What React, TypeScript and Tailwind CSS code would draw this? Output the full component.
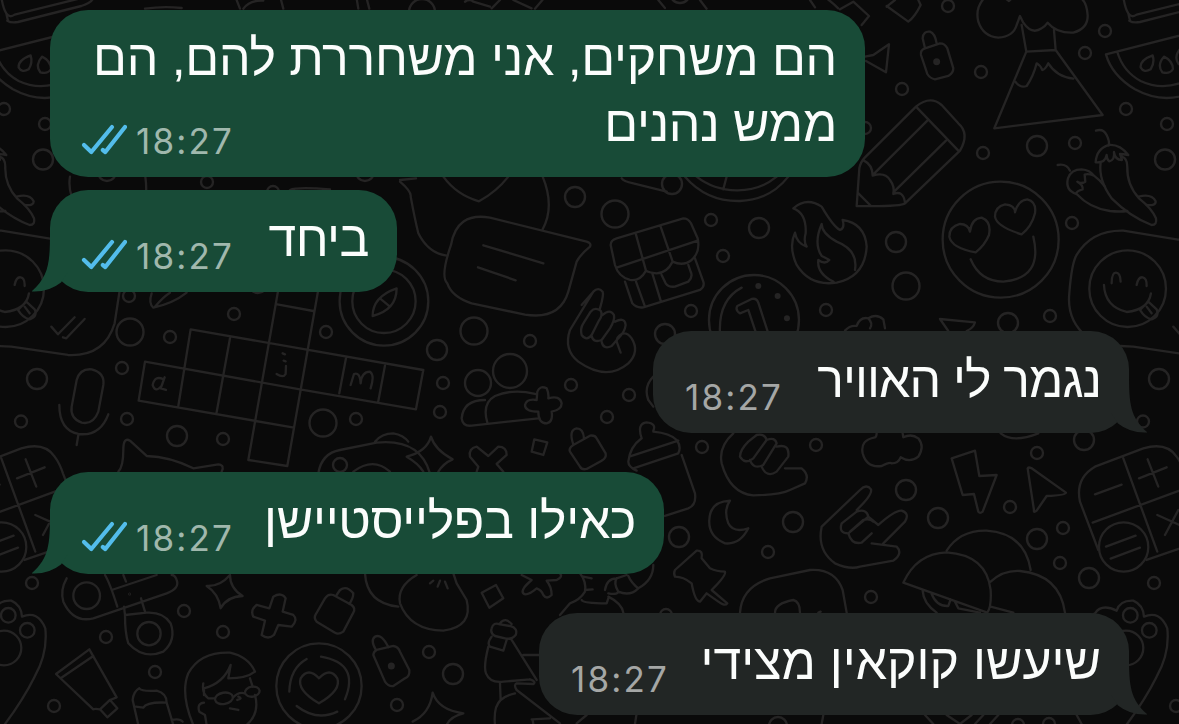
import React from 'react';

interface Message {
  id: number;
  lines: string[];
  time: string;
  outgoing: boolean;
  tail: boolean;
  box: string;
  text: string;
}

const messages: Message[] = [
  {
    id: 1,
    lines: ['הם משחקים, אני משחררת להם, הם', 'ממש נהנים'],
    time: '18:27',
    outgoing: true,
    tail: false,
    box: 'w-[815px] h-[167px]',
    text: 'tracking-[-0.270px]',
  },
  {
    id: 2,
    lines: ['ביחד'],
    time: '18:27',
    outgoing: true,
    tail: true,
    box: 'w-[347px] h-[102px] mt-[13px]',
    text: 'tracking-[-0.500px]',
  },
  {
    id: 3,
    lines: ['נגמר לי האוויר'],
    time: '18:27',
    outgoing: false,
    tail: true,
    box: 'w-[476px] h-[102px] mt-[39px]',
    text: 'tracking-[-1px]',
  },
  {
    id: 4,
    lines: ['כאילו בפלייסטיישן'],
    time: '18:27',
    outgoing: true,
    tail: true,
    box: 'w-[614px] h-[102px] mt-[39px]',
    text: 'tracking-[-0.280px]',
  },
  {
    id: 5,
    lines: ['שיעשו קוקאין מצידי'],
    time: '18:27',
    outgoing: false,
    tail: true,
    box: 'w-[590px] h-[102px] mt-[39px]',
    text: 'tracking-[0px]',
  },
];

// x, y, radius of the loose dots in the wallpaper
const dots = [
  [948, 6, 6], [981, 72, 6], [902, 89, 6], [1037, 146, 10], [983, 153, 6], [896, 242, 10],
  [906, 286, 13.5], [826, 310, 6], [1008, 323, 10], [865, 128, 6], [575, 197, 10], [615, 214, 13.5],
  [672, 184, 10], [711, 220, 6], [759, 228, 10], [723, 256, 6], [691, 311, 6], [474, 331, 13.5],
  [665, 334, 10], [422, 12, 13], [680, -7, 10], [207, 182, 6], [107, 172, 9], [273, 192, 6],
  [365, 172, 9], [129, 296, 6], [130, 332, 13.5], [170, 337, 6], [234, 314, 6], [326, 332, 6],
  [122, 368, 6], [127, 419, 6], [177, 436, 10], [223, 439, 6], [323, 423, 13.5], [356, 419, 6],
  [340, 465, 7], [258, 284, 9], [437, 350, 10], [530, 341, 6], [443, 383, 6], [440, 412, 6],
  [571, 385, 6], [629, 395, 6], [607, 417, 6], [702, 447, 6], [478, 383, 13], [510, 371, 17],
  [816, 445, 6], [906, 490, 10], [938, 518, 10], [793, 522, 10], [1037, 453, 6], [1084, 440, 10],
  [1010, 507, 6], [1037, 539, 10], [1063, 528, 6], [1060, 563, 6], [1089, 578, 10], [871, 597, 6],
  [106, 637, 6], [184, 611, 6], [223, 632, 6], [155, 672, 6], [429, 652, 6], [453, 674, 10],
  [397, 705, 6], [679, 537, 10], [666, 615, 6], [768, 552, 6], [778, 726, 9], [1018, 725, 6],
  [1049, 724, 6],
];

// Doodles on the seam, drawn once on each side of the screen
const Seam = () => (
  <>
    <circle cx="1105" cy="31" r="6" />
    <circle cx="1085" cy="53" r="6" />
    <circle cx="1126" cy="109" r="6" />
    <circle cx="1167" cy="124" r="6" />
    <circle cx="1165" cy="159.500" r="10" />
    <circle cx="1075" cy="143" r="6" />
    <circle cx="1072" cy="223" r="6" />
    <circle cx="1050" cy="316" r="6" />
    <circle cx="1159" cy="379" r="10" />
    <circle cx="1143" cy="421.500" r="6" />
    <circle cx="1154" cy="583" r="6" />
    <circle cx="1176" cy="706" r="6" />
    <g transform="translate(790 0) scale(.3333)" strokeWidth="7">
      {/* laptop corner */}
      <path d="M1000 -10Q1005 25 1015 40T1040 44L1265 -12M1018 62Q1030 70 1050 66L1240 18Q1270 8 1275 -4M1015 40L1020 62" />
      {/* watermelon */}
      <path d="M948 163L1295 75Q1325 210 1225 268Q1130 320 1035 268Q965 225 948 163ZM982 156Q1000 215 1052 243Q1120 275 1195 240Q1265 200 1262 86" />
      <path d="M1088 166Q1050 180 1052 202Q1062 220 1082 208Q1095 188 1088 166ZM1122 170Q1100 195 1117 217Q1140 223 1149 207Q1148 182 1122 170ZM1172 145Q1150 170 1166 192Q1190 198 1196 180Q1195 155 1172 145Z" />
      {/* chilies */}
      <path d="M918 392Q940 385 950 405Q960 425 956 437M917 487Q920 445 958 435Q990 433 1015 465Q1000 462 990 462L996 480Q975 480 972 456Q975 480 958 484Q950 478 950 465Q945 490 917 487ZM932 488Q925 540 965 595Q1020 650 1085 675Q1102 675 1098 655Q1085 625 1048 596Q1010 555 1012 500Q1012 475 996 470" />
      <path d="M803 495Q830 490 840 512M1046 590Q1085 580 1097 604Q1098 618 1070 615M858 582Q825 570 834 535Q843 508 875 508Q900 510 912 527Q895 520 884 524L886 545Q872 553 862 545Q880 555 878 568Q860 572 858 582ZM912 527Q930 540 945 560M860 582Q900 625 960 633Q990 636 1012 633" />
      {/* emoji bubble */}
      <path d="M890 1010Q830 960 838 880Q845 790 860 765Q905 690 1000 692L1160 718Q1270 735 1275 738Q1355 760 1360 840L1340 970Q1310 1070 1200 1065L1030 1040Q950 1040 890 1010Z" />
      <circle cx="1013" cy="866" r="115" />
      <path d="M965 850Q965 818 978 818T992 845M1040 855Q1045 830 1058 832T1070 858M942 855Q945 920 1010 936Q1075 930 1083 880M1050 930L1075 905L1100 928Q1110 950 1085 958Q1065 955 1050 930ZM1070 920L1085 940" />
      <path d="M1150 980L1170 1003L1220 952M1185 1012L1195 1015L1250 957" />
    </g>
    <g transform="translate(780 320) scale(.3333)" strokeWidth="7">
      {/* calculator */}
      <path d="M900 545Q885 475 945 440L1090 385Q1160 365 1190 410Q1205 430 1215 460L1280 630Q1290 650 1260 665L1100 720M900 545L955 690M1030 415L1132 695M938 608L1225 502M945 523L1025 494M1077 475L1160 442M1103 418L1135 500M1132 585L1210 620M1195 570L1155 645" />
      <circle cx="1031" cy="681" r="74" />
      <path d="M978 680L1067 647M992 716L1080 683" />
    </g>
    <g transform="translate(750 540) scale(.3333)" strokeWidth="7">
      {/* map pin */}
      <path d="M1035 220Q1055 190 1100 212Q1110 180 1150 182Q1180 195 1182 230Q1230 210 1252 265Q1260 340 1220 410Q1180 490 1110 580M1035 220Q990 240 990 330" />
      <circle cx="1141" cy="226" r="22" />
      <circle cx="1198" cy="271" r="22" />
      <circle cx="1128" cy="324" r="52" />
    </g>
  </>
);

const Wallpaper = () => (
  <svg
    className="absolute inset-0"
    width="1179"
    height="724"
    viewBox="0 0 1179 724"
    fill="none"
    stroke="#252424"
    strokeWidth="2.400"
    strokeLinecap="round"
    strokeLinejoin="round"
    aria-hidden="true"
  >
    {dots.map(([x, y, r]) => (
      <circle key={`${x}-${y}`} cx={x} cy={y} r={r} />
    ))}
    <Seam />
    <g transform="translate(-1122 0)">
      <Seam />
    </g>

    {/* top strip */}
    <g transform="scale(.3333)" strokeWidth="7">
      <path d="M435 26Q490 18 545 24M708 -5L720 26M730 26Q750 0 790 2M842 -5L850 26M1070 -5L1075 26M1100 -5L1108 26" />
      <path d="M1395 5Q1410 -5 1420 5L1470 20M1500 0L1475 25M1540 0L1595 25M1630 -3L1605 26M1975 0L1995 24M1090 0M2100 0L2120 26M2480 -5Q2500 10 2515 25" />
      <path d="M210 530Q205 560 215 590M436 530Q440 560 438 580M870 570Q890 560 990 568" />
    </g>

    <g transform="translate(400 0) scale(.3333)" strokeWidth="7">
      {/* heart bubble and its reply */}
      <path d="M0 540L48 535M0 545Q35 575 32 590Q45 660 55 700Q85 760 140 767M130 530Q170 585 237 604Q290 575 325 530M428 530Q465 620 428 688" />
      <path d="M270 653Q170 635 153 735Q120 830 142 850Q155 890 215 910L375 944Q480 960 505 875L530 785Q540 765 570 740Q575 730 560 725ZM250 736L430 790M234 802L347 841" />
      {/* coin behind the first message */}
      <path d="M665 535Q670 545 700 550L800 575M855 530Q920 605 1020 603Q1110 600 1165 530M890 530Q940 570 1010 571Q1080 572 1130 530M980 530L970 568" />
      {/* gift */}
      <path d="M632 735Q632 720 650 715L850 655Q865 655 873 670L893 715Q902 755 875 780Q850 800 818 785Q800 820 770 820Q745 818 738 812Q720 845 690 840Q655 830 645 795ZM708 704L738 812M782 680L818 785M650 803L893 722M675 845L697 910Q710 925 730 922L900 870Q915 860 910 845L885 775M708 845L735 920M757 820L783 905M785 825L797 850Q805 862 825 860L865 845Q880 830 872 815L865 795" />
      {/* coin */}
      <circle cx="1062" cy="960" r="135" />
      <path d="M1025 863Q955 900 960 1000M1075 1020L1045 930L1020 940Q1005 930 1012 918L1055 897Q1070 893 1075 908L1105 1000" />
      <g fill="#252424" stroke="none">
        <circle cx="1075" cy="858" r="9" />
        <circle cx="1133" cy="888" r="9" />
        <circle cx="1161" cy="955" r="9" />
      </g>
    </g>

    <g transform="translate(790 0) scale(.3333)" strokeWidth="7">
      {/* sweets around the corner of the bubble */}
      <path d="M150 28L190 5L237 48L215 75M290 20L315 0M290 18L355 65Q375 50 392 15L385 0M60 0L75 22M225 170L250 165L297 133L288 217L228 183" />
      {/* padlock */}
      <path d="M405 145L398 115Q400 92 420 95Q435 100 440 130M393 165Q390 150 405 145L450 130Q465 130 472 145L490 205Q490 220 475 228L435 238Q420 235 412 222Z" />
      <circle cx="440" cy="185" r="7" fill="#252424" />
      {/* volcano */}
      <path d="M582 -5Q555 25 565 65Q580 110 625 113Q670 110 680 75L690 48L700 68Q725 105 755 85Q765 80 773 68Q800 100 850 98Q895 85 893 45Q890 0 865 -10M650 -2L657 3L662 -2M695 75L709 155L797 150L792 90M709 155L613 385L938 345L797 150M676 245Q690 265 710 258Q730 230 740 190Q750 195 757 210Q765 210 775 190Q800 230 850 236" />
      {/* pencil */}
      <path d="M378 320Q420 285 455 315L505 370Q540 400 510 452L345 610Q335 620 200 618L208 505Q212 485 225 472ZM378 320L505 452M412 362L250 523M468 422L310 577M222 482Q248 495 248 527Q285 515 300 540Q315 560 310 582Q340 570 345 608M203 578L243 618" />
      {/* heart eyes */}
      <circle cx="632" cy="719" r="174" />
      <path d="M557 757Q485 745 478 710Q478 680 510 672Q535 672 540 695Q545 655 575 653Q605 665 597 705Q585 735 557 757ZM695 703Q620 680 615 650Q615 620 645 613Q675 615 675 637Q685 600 712 598Q740 605 735 640Q725 680 695 703ZM542 778Q570 845 640 845Q760 835 730 710" />
      {/* flame */}
      <path d="M10 625Q50 590 95 620Q130 680 150 690Q165 685 158 660Q225 670 230 740Q225 830 140 848Q60 860 20 795Q-5 740 15 698Q20 730 50 740Q40 725 47 700Q50 640 10 625ZM195 810Q205 750 140 725Q95 700 95 672Q70 730 95 768Q110 775 118 780Q105 795 85 780Q80 820 130 845" />
      <path d="M165 992Q180 975 200 978Q210 950 235 955Q250 970 240 985M235 955Q260 940 280 958L285 985M450 957L555 967Q550 985 530 993M450 957L475 993" />
    </g>

    <g transform="translate(0 260) scale(.3333)" strokeWidth="7">
      {/* leaf */}
      <path d="M455 100Q445 130 460 143Q520 130 560 98M465 140Q490 110 510 98" />
      {/* crossword */}
      <path d="M572 208L1270 330L1248 448M435 305L900 388L1248 448M416 422L882 503M572 208L535 438M435 305L416 422M690 235L650 457M840 60L745 600L862 618L960 60M1038 295L1018 400M1155 317L1135 424M832 133L940 153" />
      <path d="M490 358Q465 345 458 375Q465 400 485 378L494 352L482 385L498 390M848 280L855 283M851 302L857 304M830 342Q850 355 857 342L858 318M1052 375L1062 342Q1080 335 1082 370Q1085 335 1110 335Q1125 345 1112 385" />
      {/* microphone */}
      <path d="M230 360Q240 325 275 328Q315 338 310 375L295 455Q280 495 245 488Q210 475 215 440ZM178 435Q178 510 235 522Q300 530 325 463M235 525L230 555" />
      {/* cat */}
      <path d="M355 635Q370 620 370 570Q370 530 390 542L440 588Q510 590 580 625L655 613Q675 615 665 635" />
      {/* compass */}
      <circle cx="1152" cy="124" r="133" />
      <circle cx="1152" cy="124" r="95" />
      <path d="M1118 168Q1118 110 1190 85Q1190 150 1118 168ZM1140 115L1170 140" />
      {/* gamepad */}
      <path d="M955 640Q965 580 1020 570L1130 548Q1260 535 1290 640M1125 545Q1145 520 1180 520Q1210 525 1225 545M1060 635Q1120 590 1170 635" />
    </g>

    <g transform="translate(380 260) scale(.3333)" strokeWidth="7">
      {/* calling hand */}
      <path d="M605 135L640 95Q655 80 668 95Q672 105 660 145M640 95L570 210Q550 270 595 305Q680 365 745 310Q780 275 755 235Q740 215 725 222Q710 230 710 245L722 278M632 155Q645 140 662 152Q670 165 655 185L635 225Q620 245 605 225Q600 205 610 190ZM668 165Q690 145 702 165Q705 180 690 205L665 240Q640 250 635 228M705 185Q735 170 737 195Q735 215 715 235L695 258Q670 270 665 245" />
      {/* people */}
      <path d="M315 420Q250 420 245 475Q248 500 275 497L475 475M322 488Q305 430 345 408Q400 385 465 402M472 395Q480 375 500 385Q507 400 505 415Q540 405 545 430Q545 450 515 455Q520 485 500 490Q475 490 475 455Q435 455 435 435Q440 415 470 420Z" />
      <path d="M153 530Q165 570 218 598Q190 610 175 635M153 530Q140 575 80 590Q115 610 130 635" />
      <path d="M290 635L295 620L270 590Q265 565 290 560L325 588L355 560Q380 560 380 585L350 612L370 635" />
      <path d="M463 538L502 547L490 585L455 575Z" />
      {/* bottle */}
      <path d="M580 553Q565 510 590 505Q610 505 612 535M570 575Q565 565 580 555L630 527Q645 525 650 535L677 580Q680 595 665 602L620 627Q605 630 600 620Z" />
      <path d="M820 512Q830 490 800 487Q770 490 785 535Q750 560 745 605Q745 620 770 632M748 590L895 542M820 515Q870 520 890 540Q905 560 895 580L760 625M905 585L945 700Q950 735 925 745L855 768" />
      {/* fist */}
      <path d="M820 350Q790 380 805 420L820 440M1060 520Q1015 560 1025 610Q1050 700 1120 706Q1200 705 1230 690L1275 670Q1290 645 1265 625L1215 625M1130 525Q1155 520 1160 540L1120 595Q1095 615 1080 590Q1080 570 1105 545ZM1160 540Q1185 530 1190 550L1150 615Q1120 630 1110 600M1190 560Q1230 550 1225 590L1190 635Q1160 655 1145 620" />
      <path d="M988 780Q990 725 1050 722Q1030 750 1045 790M1045 790Q1060 820 1105 805Q1080 855 1035 850Q985 830 988 780" />
    </g>

    <g transform="translate(780 320) scale(.3333)" strokeWidth="7">
      {/* cloud */}
      <path d="M290 340Q290 350 285 352Q240 360 248 400Q260 445 305 438Q330 425 335 430Q355 430 362 412Q390 430 415 410Q435 380 415 355Q395 340 370 352L368 340M662 340Q700 370 775 340" />
      {/* bolt */}
      <path d="M515 415L585 392L598 468L650 465L608 575Q600 582 595 575L582 522L548 525Z" />
      {/* cursor */}
      <path d="M743 445Q745 440 755 445L858 518Q858 525 800 528L770 572Q760 580 762 570Z" />
      {/* rock hand */}
      <path d="M125 620L240 510Q260 490 273 508Q278 525 230 570M125 620Q110 690 165 730Q210 750 240 740L340 722Q370 700 350 680L275 670M310 670L375 605Q390 580 365 572Q345 570 295 615L265 590Q260 565 230 575L185 610Q175 640 205 640L265 590M205 640Q215 675 245 668L275 640M210 635L250 600Q270 595 280 605" />
      {/* helmets */}
      <path d="M500 692Q540 630 620 632Q735 640 752 750M370 788Q410 700 500 697Q620 705 632 810Q635 860 622 878L370 788M632 785Q670 750 720 753Q840 765 855 878M428 812Q430 850 470 878M455 822Q470 860 505 858L512 838M525 845L535 865L600 878M632 860L700 878" />
    </g>

    <g transform="translate(0 460) scale(.3333)" strokeWidth="7">
      {/* scissors */}
      <path d="M200 355Q180 390 190 425Q220 490 280 475L500 400Q540 385 530 360Q525 345 515 345M315 345Q330 370 352 440M335 390L470 345M370 345L378 365M375 465Q375 520 385 550Q430 600 490 575Q530 540 512 490Q490 455 440 458L375 465L372 440M423 415L435 455" />
      <circle cx="260" cy="407" r="40" />
      <circle cx="447" cy="521" r="35" />
      <circle cx="389" cy="402" r="1" />
      {/* sparkle */}
      <path d="M690 345Q690 385 728 408Q680 410 662 445Q655 400 620 378Q660 380 690 345Z" />
      {/* plus */}
      <path d="M820 410Q845 395 857 415L848 455L880 465Q895 480 875 500L835 495L822 525Q805 540 785 525L795 482L760 470Q750 450 770 435L808 445Z" />
      {/* bottle */}
      <path d="M1010 405L1020 390Q1040 375 1060 400Q1060 415 1048 432M975 415Q985 400 1000 405L1055 435Q1068 445 1060 458L1030 515Q1015 525 1005 518L950 485Q940 475 948 462Z" />
      {/* tube */}
      <path d="M168 642L268 568L350 712L330 720L300 748Q285 745 280 748ZM182 655L280 588M330 720L352 745L322 772L300 748" />
      {/* paste */}
      <path d="M415 795L398 720Q400 695 418 685Q425 695 470 692Q500 700 500 728Q440 725 430 743L408 740M500 728L520 795M515 780Q540 775 548 785" />
      {/* boy with glasses */}
      <path d="M580 795Q540 700 565 640Q600 575 690 578Q745 590 765 635Q740 655 685 655L692 615Q670 670 612 685L612 705M610 670Q605 700 625 715L645 715M765 705Q780 760 740 795M750 655L758 680M612 728Q590 730 598 755L615 765L620 795M690 745L715 750M715 710Q730 715 712 720" />
      <ellipse cx="672" cy="715" rx="27" ry="17" transform="rotate(-10 672 715)" />
      <ellipse cx="757" cy="695" rx="22" ry="15" transform="rotate(-10 757 695)" />
      <path d="M700 712Q715 695 735 700" />
      {/* heart coin */}
      <circle cx="957" cy="678" r="128" />
      <path d="M957 655Q925 620 902 655Q890 690 957 730Q1025 690 1012 655Q990 620 957 655ZM868 695Q870 625 920 597M963 590Q1080 610 1035 718M890 738Q950 785 1012 755" />
    </g>

    <g transform="translate(350 540) scale(.3333)" strokeWidth="7">
      {/* boxing glove */}
      <path d="M45 100Q50 190 145 200M200 105Q140 140 150 190Q180 270 280 272Q370 260 350 180L320 130L310 100M240 130L250 122M263 140L270 122M293 145L285 125" />
      <path d="M395 158L438 135L460 175L418 203Z" />
      {/* bone */}
      <path d="M515 105L545 120Q510 150 520 160Q530 170 560 145Q575 150 580 165Q590 180 605 165Q605 140 590 122L620 120Q640 110 630 100" />
      {/* genie */}
      <path d="M690 100Q710 125 705 155Q690 180 660 190L630 225M700 110L725 115M705 150L728 148M695 180Q700 190 770 190L775 175M765 150Q770 115 800 115L830 105M775 160Q800 165 805 155Q790 130 800 115M805 155Q840 170 865 145Q845 130 835 108M865 145Q910 120 910 75M775 170Q815 190 820 218" />
      {/* pushpin */}
      <path d="M1040 32Q1060 30 1055 55L1080 85Q1100 95 1125 95Q1130 105 1085 150L1132 190Q1125 200 1105 185L1070 160L1050 185Q1035 185 1025 130Q1000 110 975 110Q970 100 975 90Z" />
      {/* padlock */}
      <path d="M78 330Q60 300 75 290Q95 280 115 322M70 345Q70 335 80 330L130 318Q145 320 150 335L178 390Q180 410 165 415L130 438Q115 440 105 425Z" />
      <circle cx="124" cy="378" r="7" fill="#252424" />
      <path d="M248 458Q265 510 340 520Q300 530 290 555M248 458Q240 520 188 545" />
      {/* wizard */}
      <path d="M450 250Q465 230 485 252M425 265Q430 245 450 253L480 258Q505 265 497 285Q485 300 465 295L435 288Q420 280 425 265ZM425 290Q410 310 420 320L460 332L470 300M415 320Q400 380 408 400Q420 430 460 425L540 418M485 300L560 420M520 345L570 345M540 418Q560 425 550 432L500 430Q490 435 500 450L630 550M450 430L452 480Q430 500 435 555M495 460Q450 470 440 500M548 540L550 552M545 538L600 535M860 520L855 552M680 550L710 525" />
    </g>

    <g transform="translate(750 540) scale(.3333)" strokeWidth="7">
      {/* mask, and what shows below the last message */}
      <path d="M-30 218Q-25 140 60 115L180 90Q255 85 278 150L290 218M75 218Q75 190 130 180Q150 185 150 218M205 218L212 215M215 552L220 525M525 525L550 552M590 525L630 552L665 525M700 525L675 552M745 525L720 552M980 525L995 552" />
    </g>
  </svg>
);

const Checks = () => (
  <svg
    className="mr-[8px] mb-[22px]"
    width="46"
    height="31"
    viewBox="0 0 46 31"
    fill="none"
    stroke="#53bdeb"
    strokeWidth="4.200"
    strokeLinecap="round"
    strokeLinejoin="round"
  >
    <path d="M3 21L10.300 28L31 3" />
    <path d="M21.800 26L24.300 28L44 3" />
  </svg>
);

const Tail = ({ outgoing }: { outgoing: boolean }) => (
  <svg
    className={outgoing ? 'absolute bottom-0 -left-[18px]' : 'absolute bottom-0 -right-[18px] -scale-x-100'}
    width="36"
    height="60"
    viewBox="0 0 36 60"
    fill={outgoing ? '#184b37' : '#222625'}
  >
    <path d="M18 0C18 30 17 44 0 59Q-.500 59.500 1 59.500Q17 60 29 50.500L36 40V0Z" />
  </svg>
);

const Bubble = ({ message }: { message: Message }) => {
  const { outgoing, lines, time, tail, box, text } = message;

  return (
    <div
      className={`relative flex shrink-0 items-end justify-between rounded-[38px] pr-[28px] pl-[31px] ${box} ${
        outgoing ? 'self-start bg-[#184b37]' : 'self-end bg-[#222625]'
      }`}
    >
      {tail && <Tail outgoing={outgoing} />}
      <div className="relative flex items-end">
        {outgoing && <Checks />}
        <span
          className={`mb-[11px] ml-px font-[Inter,sans-serif] text-[35px] leading-[50px] tracking-[2.200px] ${
            outgoing ? 'text-[#a0b8ad]' : 'text-[#a5a7a6]'
          }`}
        >
          {time}
        </span>
      </div>
      <div
        dir="rtl"
        className={`relative mb-[20px] -ml-[200px] font-['Liberation_Sans',sans-serif] text-[50px] leading-[66px] whitespace-nowrap text-[#fbfdfc] ${text}`}
      >
        {lines.map((line) => (
          <p key={line}>{line}</p>
        ))}
      </div>
    </div>
  );
};

export default function App() {
  return (
    <div className="relative h-[724px] w-[1179px] overflow-hidden bg-[#0a0a0a]">
      <Wallpaper />
      <main className="relative flex h-full flex-col px-[50px] pt-[10px]">
        {messages.map((message) => (
          <Bubble key={message.id} message={message} />
        ))}
      </main>
    </div>
  );
}
